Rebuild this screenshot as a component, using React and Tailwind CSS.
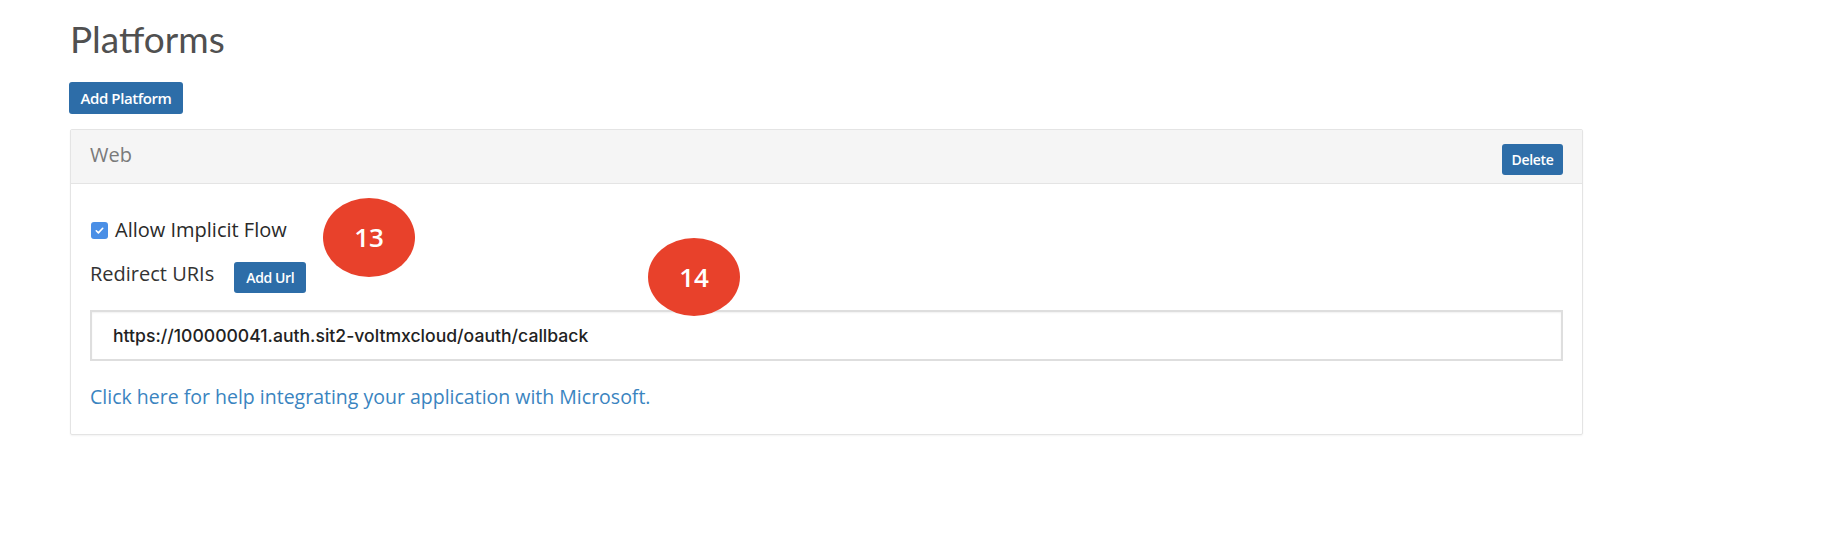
import React from 'react';

function Marker({ n, className }) {
    return (
        <div className={`absolute flex items-center justify-center rounded-[50%] bg-[#e8412b] text-white font-semibold text-[26px] ${className}`}>
            {n}
        </div>
    );
}

export default function App() {
    return (
        <div className="relative w-full h-[544px] bg-white pl-[70px] font-['Open_Sans',sans-serif] overflow-hidden">
            <h1 className="pt-[17px] font-['Lato',sans-serif] text-[37px] leading-[44px] text-[#505050]">Platforms</h1>

            <button className="mt-[21px] -ml-px h-[32px] w-[114px] rounded-[3px] bg-[#2d6da8] text-[15px] font-semibold tracking-[-0.4px] text-white">
                Add Platform
            </button>

            <div className="mt-[15px] w-[1513px] border border-[#e4e4e4] rounded-[2px] shadow-[0_1px_2px_rgba(0,0,0,0.05)]">
                <div className="flex h-[54px] items-start justify-between border-b border-[#e4e4e4] bg-[#f5f5f5] px-[19px] pt-[11px]">
                    <span className="text-[20px] leading-[28px] text-[#7a7a7a]">Web</span>
                    <button className="mt-[3px] h-[31px] w-[61px] rounded-[3px] bg-[#2d6da8] text-[14px] font-semibold tracking-[-0.3px] text-white">
                        Delete
                    </button>
                </div>

                <div className="px-[19px] pt-[32px] pb-[24px]">
                    <label className="flex items-center">
                        <span className="ml-px flex h-[17px] w-[17px] items-center justify-center rounded-[3px] bg-[#4a8fe6]">
                            <svg viewBox="0 0 12 12" className="h-[11px] w-[11px]" fill="none" stroke="white" strokeWidth="1.8" strokeLinecap="round" strokeLinejoin="round">
                                <path d="M2.5 6.3l2.3 2.3 4.7-5" />
                            </svg>
                        </span>
                        <span className="ml-[7px] text-[20px] leading-[28px] text-[#2a2a2a]">Allow Implicit Flow</span>
                    </label>

                    <div className="mt-[16px] flex items-start">
                        <span className="text-[20px] leading-[28px] text-[#333]">Redirect URIs</span>
                        <button className="ml-[20px] mt-[2px] h-[31px] w-[72px] rounded-[3px] bg-[#2d6da8] text-[14px] font-semibold tracking-[-0.4px] text-white">
                            Add Url
                        </button>
                    </div>

                    <div className="mt-[17px] flex h-[51px] items-center border-2 border-[#dedede] bg-white pl-[21px] shadow-[inset_0_1px_2px_rgba(0,0,0,0.06)]">
                        <span className="font-['Inter',sans-serif] text-[17.6px] font-medium leading-[24px] text-[#222]">
                            https://100000041.auth.sit2-voltmxcloud/oauth/callback
                        </span>
                    </div>

                    <a className="mt-[23px] block text-[19.5px] leading-[26px] text-[#3a84bf]">
                        Click here for help integrating your application with Microsoft.
                    </a>
                </div>
            </div>

            <Marker n="13" className="left-[323px] top-[198px] h-[79px] w-[92px]" />
            <Marker n="14" className="left-[648px] top-[238px] h-[78px] w-[92px]" />
        </div>
    );
}
